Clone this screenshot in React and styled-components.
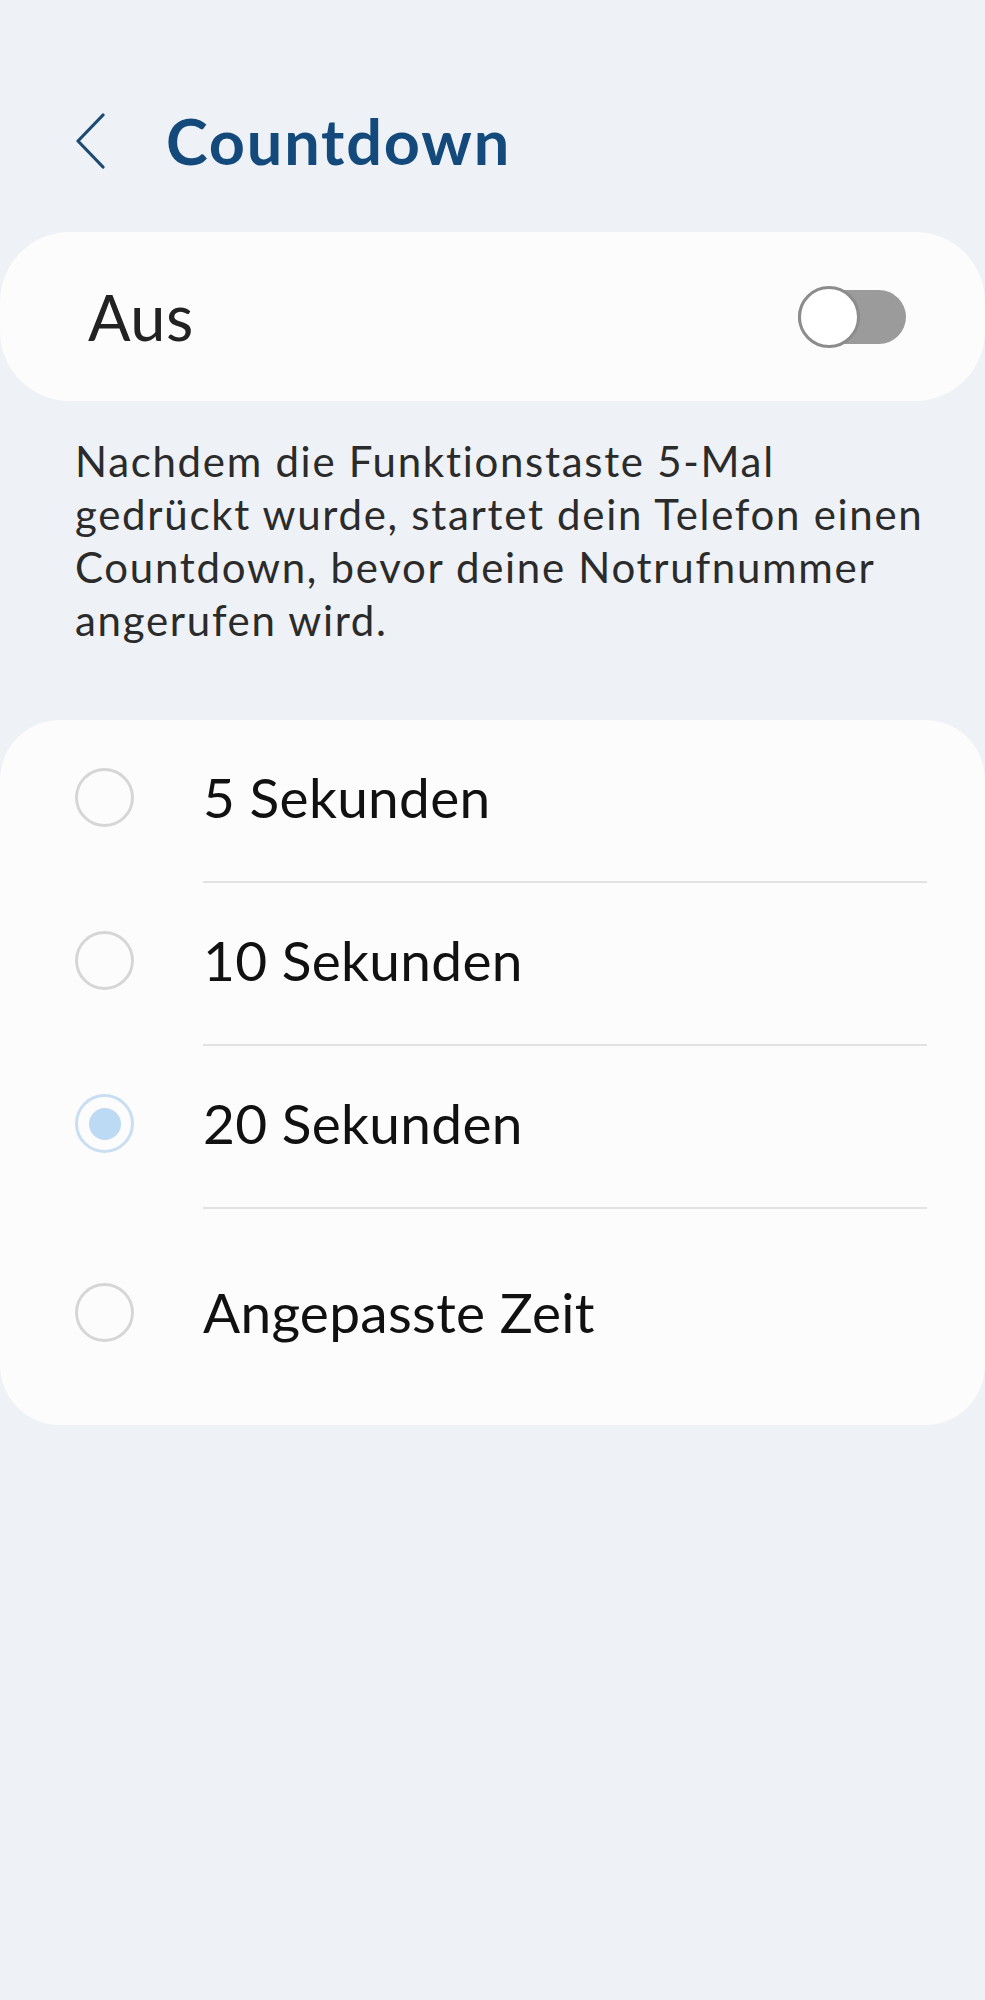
import React from "react";
import styled, { createGlobalStyle } from "styled-components";

const GlobalStyle = createGlobalStyle`
  html, body {
    margin: 0;
    padding: 0;
    background: #eef1f5;
    font-family: Lato, "Open Sans", sans-serif;
    font-variant-ligatures: none;
  }
`;

const Page = styled.div`
  min-height: 2000px;
  background: #eef1f5;
`;

const Header = styled.header`
  display: flex;
  align-items: center;
  padding: 103px 0 0 76px;
  height: 76px;
`;

const BackButton = styled.button`
  display: flex;
  align-items: center;
  background: none;
  border: none;
  padding: 0;
  margin-right: 60px;
  cursor: pointer;
`;

const Title = styled.h1`
  margin: 0;
  font-size: 63px;
  line-height: 1.2;
  font-weight: 700;
  letter-spacing: 1.8px;
  color: #134a7b;
`;

const Card = styled.section`
  background: #fcfcfc;
  border-radius: ${(p) => p.$radius}px;
`;

const ToggleCard = styled(Card)`
  margin-top: 53px;
  height: 169px;
  display: flex;
  align-items: center;
  justify-content: space-between;
  padding: 0 79px 0 88px;
`;

const ToggleLabel = styled.span`
  font-size: 63px;
  letter-spacing: 0.5px;
  color: #222;
`;

const Switch = styled.div`
  position: relative;
  width: 108px;
  height: 54px;
  border-radius: 27px;
  background: #9b9b9b;
`;

const Knob = styled.span`
  position: absolute;
  left: 0;
  top: -4px;
  width: 56px;
  height: 56px;
  border-radius: 50%;
  background: #fff;
  border: 3px solid #8c8c8c;
`;

const Description = styled.p`
  margin: 34px 0 0;
  padding: 0 10px 0 75px;
  font-size: 42px;
  line-height: 53px;
  letter-spacing: 1.7px;
  color: #2b2b2b;
  white-space: nowrap;
`;

const OptionsCard = styled(Card)`
  margin-top: 73px;
  overflow: hidden;
`;

const Row = styled.div`
  display: flex;
  align-items: stretch;
  height: ${(p) => p.$height}px;
  cursor: pointer;
`;

const RadioWrap = styled.div`
  display: flex;
  align-items: center;
  padding: 0 69px ${(p) => p.$offset}px 75px;
`;

const Radio = styled.span`
  display: flex;
  align-items: center;
  justify-content: center;
  width: 53px;
  height: 53px;
  border-radius: 50%;
  border: 3px solid ${(p) => (p.$checked ? "#c9dff1" : "#d6d6d6")};

  &::after {
    content: "";
    display: ${(p) => (p.$checked ? "block" : "none")};
    width: 32px;
    height: 32px;
    border-radius: 50%;
    background: #bddaf4;
  }
`;

const Label = styled.div`
  flex: 1;
  display: flex;
  align-items: center;
  margin-right: 58px;
  padding-bottom: ${(p) => p.$offset}px;
  font-size: 55px;
  letter-spacing: 0.3px;
  color: #111;
  border-bottom: ${(p) => (p.$last ? "none" : "2px solid #e2e2e2")};
`;

const options = [
  { label: "5 Sekunden" },
  { label: "10 Sekunden" },
  { label: "20 Sekunden", checked: true },
  { label: "Angepasste Zeit" },
];

const ChevronLeft = () => (
  <svg width="30" height="56" viewBox="0 0 30 56" fill="none">
    <path
      d="M27 2 L2 28 L27 54"
      stroke="#1d4a73"
      strokeWidth="3.2"
      strokeLinecap="round"
      strokeLinejoin="round"
    />
  </svg>
);

const App = () => {
  return (
    <Page>
      <GlobalStyle />
      <Header>
        <BackButton aria-label="Zurück">
          <ChevronLeft />
        </BackButton>
        <Title>Countdown</Title>
      </Header>

      <ToggleCard $radius={70}>
        <ToggleLabel>Aus</ToggleLabel>
        <Switch>
          <Knob />
        </Switch>
      </ToggleCard>

      <Description>
        Nachdem die Funktionstaste 5-Mal
        <br />
        gedrückt wurde, startet dein Telefon einen
        <br />
        Countdown, bevor deine Notrufnummer
        <br />
        angerufen wird.
      </Description>

      <OptionsCard $radius={60}>
        {options.map((opt, i) => {
          const last = i === options.length - 1;
          const offset = last ? 10 : 8;
          return (
            <Row key={opt.label} $height={last ? 216 : 163}>
              <RadioWrap $offset={offset}>
                <Radio $checked={opt.checked} />
              </RadioWrap>
              <Label $last={last} $offset={offset}>
                {opt.label}
              </Label>
            </Row>
          );
        })}
      </OptionsCard>
    </Page>
  );
};

export default App;
